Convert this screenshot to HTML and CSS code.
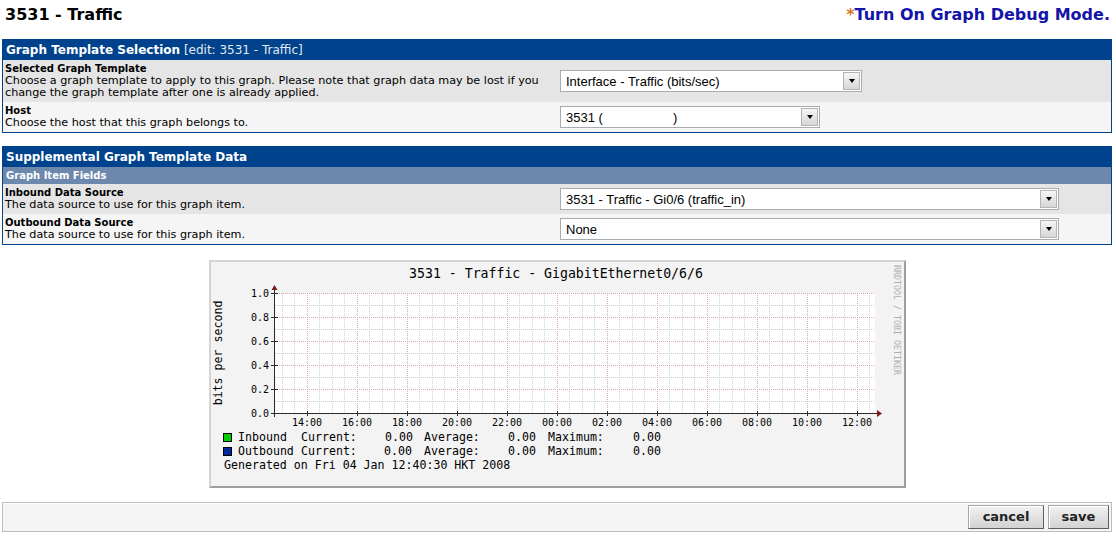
FILE: index.html
```html
<!DOCTYPE html>
<html>
<head>
<meta charset="utf-8">
<title>3531 - Traffic</title>
<link rel="stylesheet" href="styles.css">
</head>
<body>
<div class="page">
  <div class="topbar">
    <h1 class="title">3531 - Traffic</h1>
    <div class="debug"><span class="star">*</span><a class="debug-link">Turn On Graph Debug Mode.</a></div>
  </div>

  <div class="panel">
    <div class="panel-head"><span class="head-strong">Graph Template Selection</span> <span class="edit">[edit: 3531 - Traffic]</span></div>
    <div class="row row-dark row-tall">
      <div class="field-label">
        <div class="field-name">Selected Graph Template</div>
        <div class="field-desc">Choose a graph template to apply to this graph. Please note that graph data may be lost if you<br>change the graph template after one is already applied.</div>
      </div>
      <div class="field-input">
        <div class="select sel-template"><span class="sel-value">Interface - Traffic (bits/sec)</span><span class="sel-arrow"><span class="tri"></span></span></div>
      </div>
    </div>
    <div class="row row-light">
      <div class="field-label">
        <div class="field-name">Host</div>
        <div class="field-desc">Choose the host that this graph belongs to.</div>
      </div>
      <div class="field-input">
        <div class="select sel-host"><span class="sel-value">3531 (<span class="blank"></span>)</span><span class="sel-arrow"><span class="tri"></span></span></div>
      </div>
    </div>
  </div>

  <div class="panel panel-second">
    <div class="panel-head"><span class="head-strong">Supplemental Graph Template Data</span></div>
    <div class="panel-sub">Graph Item Fields</div>
    <div class="row row-dark">
      <div class="field-label">
        <div class="field-name">Inbound Data Source</div>
        <div class="field-desc">The data source to use for this graph item.</div>
      </div>
      <div class="field-input">
        <div class="select sel-ds"><span class="sel-value">3531 - Traffic - Gi0/6 (traffic_in)</span><span class="sel-arrow"><span class="tri"></span></span></div>
      </div>
    </div>
    <div class="row row-light">
      <div class="field-label">
        <div class="field-name">Outbound Data Source</div>
        <div class="field-desc">The data source to use for this graph item.</div>
      </div>
      <div class="field-input">
        <div class="select sel-ds"><span class="sel-value">None</span><span class="sel-arrow"><span class="tri"></span></span></div>
      </div>
    </div>
  </div>

  <div class="graph-wrap">
    <svg class="graph" width="697" height="228" viewBox="0 0 697 228" xmlns="http://www.w3.org/2000/svg">
      <rect class="frame-dark" x="0" y="0" width="697" height="228"/>
      <path class="frame-light" d="M0 0H697L695 2H2V226L0 228Z"/>
      <rect class="frame-bg" x="2" y="2" width="693" height="224"/>
      <rect class="canvas" x="66" y="33" width="600" height="120"/>

      <path class="grid-minor" d="M66 45.5h600M66 69.5h600M66 93.5h600M66 117.5h600M66 141.5h600
        M73.5 33v120M85.5 33v120M110.5 33v120M123.5 33v120M135.5 33v120M160.5 33v120
        M173.5 33v120M185.5 33v120M210.5 33v120M223.5 33v120M235.5 33v120M260.5 33v120
        M273.5 33v120M285.5 33v120M310.5 33v120M323.5 33v120M335.5 33v120M360.5 33v120
        M373.5 33v120M385.5 33v120M410.5 33v120M423.5 33v120M435.5 33v120M460.5 33v120
        M473.5 33v120M485.5 33v120M510.5 33v120M523.5 33v120M535.5 33v120M560.5 33v120
        M573.5 33v120M585.5 33v120M610.5 33v120M623.5 33v120M635.5 33v120M660.5 33v120"/>
      <path class="grid-major" d="M66 33.5h600M66 57.5h600M66 81.5h600M66 105.5h600M66 129.5h600
        M98.5 33v120M148.5 33v120M198.5 33v120M248.5 33v120M298.5 33v120M348.5 33v120
        M398.5 33v120M448.5 33v120M498.5 33v120M548.5 33v120M598.5 33v120M648.5 33v120"/>

      <path class="axis" d="M62 153.5H668M65.5 30V157
        M62 33.5h7M62 57.5h7M62 81.5h7M62 105.5h7M62 129.5h7
        M98.5 151v5M148.5 151v5M198.5 151v5M248.5 151v5M298.5 151v5M348.5 151v5
        M398.5 151v5M448.5 151v5M498.5 151v5M548.5 151v5M598.5 151v5M648.5 151v5"/>
      <path class="arrow" d="M62.5 30L68.5 30L65.5 25Z M668 150L668 157L673 153.5Z"/>

      <text class="g-title" x="347" y="18" text-anchor="middle">3531 - Traffic - GigabitEthernet0/6/6</text>
      <text class="g-vlabel" transform="translate(12.5,93) rotate(-90)" text-anchor="middle">bits per second</text>
      <text class="g-mark" transform="translate(684.5,60) rotate(90)" text-anchor="middle">RRDTOOL / TOBI OETIKER</text>

      <text class="g-tick" x="60" y="37" text-anchor="end">1.0</text>
      <text class="g-tick" x="60" y="61" text-anchor="end">0.8</text>
      <text class="g-tick" x="60" y="85" text-anchor="end">0.6</text>
      <text class="g-tick" x="60" y="109" text-anchor="end">0.4</text>
      <text class="g-tick" x="60" y="133" text-anchor="end">0.2</text>
      <text class="g-tick" x="60" y="157" text-anchor="end">0.0</text>

      <text class="g-tick" x="98" y="166" text-anchor="middle">14:00</text>
      <text class="g-tick" x="148" y="166" text-anchor="middle">16:00</text>
      <text class="g-tick" x="198" y="166" text-anchor="middle">18:00</text>
      <text class="g-tick" x="248" y="166" text-anchor="middle">20:00</text>
      <text class="g-tick" x="298" y="166" text-anchor="middle">22:00</text>
      <text class="g-tick" x="348" y="166" text-anchor="middle">00:00</text>
      <text class="g-tick" x="398" y="166" text-anchor="middle">02:00</text>
      <text class="g-tick" x="448" y="166" text-anchor="middle">04:00</text>
      <text class="g-tick" x="498" y="166" text-anchor="middle">06:00</text>
      <text class="g-tick" x="548" y="166" text-anchor="middle">08:00</text>
      <text class="g-tick" x="598" y="166" text-anchor="middle">10:00</text>
      <text class="g-tick" x="648" y="166" text-anchor="middle">12:00</text>

      <rect class="sw-in" x="14.5" y="173.5" width="8" height="8"/>
      <text class="g-legend" x="29" y="181">Inbound</text>
      <text class="g-legend" x="92" y="181">Current:</text>
      <text class="g-legend" x="176" y="181">0.00</text>
      <text class="g-legend" x="215" y="181">Average:</text>
      <text class="g-legend" x="299" y="181">0.00</text>
      <text class="g-legend" x="339" y="181">Maximum:</text>
      <text class="g-legend" x="424" y="181">0.00</text>

      <rect class="sw-out" x="14.5" y="187.5" width="8" height="8"/>
      <text class="g-legend" x="29" y="195">Outbound</text>
      <text class="g-legend" x="92" y="195">Current:</text>
      <text class="g-legend" x="175" y="195">0.00</text>
      <text class="g-legend" x="215" y="195">Average:</text>
      <text class="g-legend" x="299" y="195">0.00</text>
      <text class="g-legend" x="339" y="195">Maximum:</text>
      <text class="g-legend" x="424" y="195">0.00</text>

      <text class="g-legend" x="15" y="209">Generated on Fri 04 Jan 12:40:30 HKT 2008</text>
    </svg>
  </div>

  <div class="actions">
    <button class="btn btn-cancel" type="button">cancel</button>
    <button class="btn btn-save" type="button">save</button>
  </div>
</div>
</body>
</html>
```

FILE: styles.css
```css
* { box-sizing: border-box; }

body {
  margin: 0;
  background: #ffffff;
  color: #000000;
  font-family: "DejaVu Sans", Verdana, sans-serif;
}

.page {
  width: 1116px;
  padding: 0 4px 0 2px;
}

/* ---------- top bar ---------- */
.topbar {
  display: flex;
  justify-content: space-between;
  align-items: flex-start;
  height: 39px;
  padding: 5px 2px 0 3px;
}

.title {
  margin: 0;
  font-size: 16px;
  font-weight: bold;
  line-height: 20px;
}

.debug {
  font-size: 16px;
  font-weight: bold;
  line-height: 20px;
}

.star { color: #D07A2A; }

.debug-link {
  color: #1414A8;
  text-decoration: none;
}

/* ---------- panels ---------- */
.panel {
  border: 1px solid #00438C;
}

.panel-second { margin-top: 13px; }

.panel-head {
  height: 20px;
  line-height: 20px;
  padding-left: 3px;
  background: #00438C;
  color: #ffffff;
  font-size: 12px;
  white-space: nowrap;
}

.head-strong { font-weight: bold; }

.edit {
  font-weight: normal;
  color: #E3EAF4;
}

.panel-sub {
  padding: 2px 3px;
  line-height: 13px;
  background: #6D88AD;
  color: #ffffff;
  font-size: 10px;
  font-weight: bold;
}

.row {
  display: grid;
  grid-template-columns: 1fr 1fr;
}

.row-dark { background: #E5E5E5; }
.row-light { background: #F5F5F5; }

.field-label {
  padding: 3px 2px;
  font-size: 10px;
  line-height: 12px;
  white-space: nowrap;
}

.field-name { font-weight: bold; }

.field-desc { font-size: 11.2px; }

.field-input {
  display: flex;
  align-items: center;
  padding-left: 3px;
}

/* ---------- select boxes ---------- */
.select {
  display: flex;
  align-items: center;
  justify-content: space-between;
  height: 22px;
  padding-left: 5px;
  border: 1px solid #A5ACB2;
  background: #ffffff;
  font-family: "Liberation Sans", Arial, sans-serif;
  font-size: 13px;
  color: #000000;
  white-space: pre;
}

.sel-template { width: 302px; }
.sel-host { width: 260px; }
.sel-ds { width: 499px; }

.blank {
  display: inline-block;
  width: 70px;
}

.sel-arrow {
  display: flex;
  align-items: center;
  justify-content: center;
  width: 17px;
  height: 18px;
  margin-right: 1px;
  border: 1px solid #B5B5B5;
  background: linear-gradient(#F6F6F6, #D6D6D6);
}

.tri {
  width: 0;
  height: 0;
  border-top: 4px solid #000000;
  border-left: 3.5px solid transparent;
  border-right: 3.5px solid transparent;
}

/* ---------- graph ---------- */
.graph-wrap {
  display: flex;
  justify-content: center;
  margin: 15px 0 14px;
}

.graph { display: block; }

.frame-dark { fill: #9E9E9E; }
.frame-light { fill: #D4D4D4; }
.frame-bg { fill: #F3F3F3; }
.canvas { fill: #FFFFFF; }

.grid-minor {
  fill: none;
  stroke: #D0D0D0;
  stroke-width: 1;
  stroke-dasharray: 1 1;
}

.grid-major {
  fill: none;
  stroke: #E0A8A8;
  stroke-width: 1;
  stroke-dasharray: 1 1;
}

.axis {
  fill: none;
  stroke: #2A2A2A;
  stroke-width: 1;
}

.arrow { fill: #7A1C1C; }

.graph text {
  font-family: "DejaVu Sans Mono", "Liberation Mono", monospace;
  fill: #000000;
}

.graph .g-title { font-size: 13.2px; }
.graph .g-vlabel { font-size: 11.6px; }
.graph .g-tick { font-size: 10px; }
.graph .g-legend { font-size: 11.6px; white-space: pre; }
.graph .g-mark { font-size: 8.3px; fill: #ADADAD; }

.sw-in { fill: #00CC00; stroke: #000000; stroke-width: 1; }
.sw-out { fill: #002A97; stroke: #000000; stroke-width: 1; }

/* ---------- action bar ---------- */
.actions {
  display: flex;
  justify-content: flex-end;
  gap: 4px;
  padding: 2px;
  border: 1px solid #BDBDBD;
  background: #F5F5F5;
  box-shadow: inset 0 1px 0 #ffffff;
}

.btn {
  height: 24px;
  padding: 0;
  border: 1px solid;
  border-color: #A8A8A8 #5E5E5E #5E5E5E #A8A8A8;
  background: linear-gradient(#F2F2F2, #D2D2D2);
  box-shadow: inset 1px 1px 0 #ffffff;
  font-family: "DejaVu Sans", Verdana, sans-serif;
  font-size: 13px;
  font-weight: bold;
  color: #222222;
  line-height: 22px;
}

.btn-cancel { width: 76px; }
.btn-save { width: 61px; }
```
